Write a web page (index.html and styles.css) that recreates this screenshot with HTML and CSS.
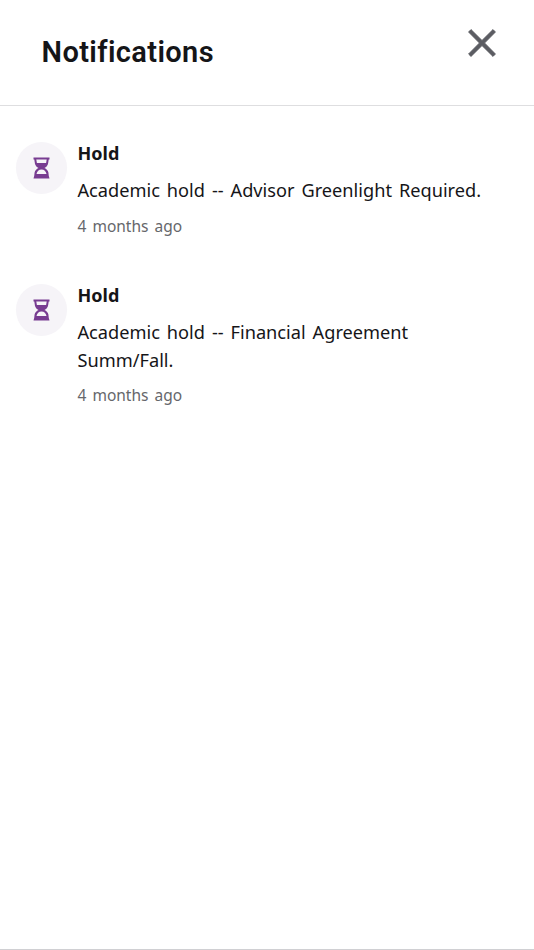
FILE: index.html
```html
<!DOCTYPE html>
<html lang="en">
<head>
    <meta charset="UTF-8">
    <meta name="viewport" content="width=device-width, initial-scale=1.0">
    <title>Notifications</title>
    <link rel="stylesheet" href="styles.css">
</head>
<body>
    <div class="panel">
        <header class="panel-header">
            <h1>Notifications</h1>
            <button type="button" class="close-btn" aria-label="Close">
                <svg width="28" height="28" viewBox="0 0 28 28">
                    <path d="M3 0.600L14 11.500L25 0.600L27.400 3L16.500 14L27.400 25L25 27.400L14 16.500L3 27.400L0.600 25L11.500 14L0.600 3Z" />
                </svg>
            </button>
        </header>

        <ul class="notification-list">
            <li class="notification">
                <span class="notification-icon">
                    <svg width="17" height="22" viewBox="0 0 17 22">
                        <path fill-rule="evenodd" d="M0.500 0.500H16.500V2.500H15.700L15 7C14.300 9 13.200 10.200 11.500 11C13.500 12 15 13.500 15.400 15.500L15.800 19L16.500 21.500H0.500L1.200 19L1.600 15.500C2 13.500 3.500 12 5.500 11C3.800 10.200 2.700 9 2 7L1.300 2.500H0.500ZM3.300 2.500L3.900 6H13.100L13.700 2.500ZM3.500 17H13.500C13 14.300 11.200 12.500 8.500 12.500S4 14.300 3.500 17Z" />
                    </svg>
                </span>
                <div class="notification-body">
                    <h2>Hold</h2>
                    <p class="message">Academic hold -- Advisor Greenlight Required.</p>
                    <p class="time">4 months ago</p>
                </div>
            </li>
            <li class="notification">
                <span class="notification-icon">
                    <svg width="17" height="22" viewBox="0 0 17 22">
                        <path fill-rule="evenodd" d="M0.500 0.500H16.500V2.500H15.700L15 7C14.300 9 13.200 10.200 11.500 11C13.500 12 15 13.500 15.400 15.500L15.800 19L16.500 21.500H0.500L1.200 19L1.600 15.500C2 13.500 3.500 12 5.500 11C3.800 10.200 2.700 9 2 7L1.300 2.500H0.500ZM3.300 2.500L3.900 6H13.100L13.700 2.500ZM3.500 17H13.500C13 14.300 11.200 12.500 8.500 12.500S4 14.300 3.500 17Z" />
                    </svg>
                </span>
                <div class="notification-body">
                    <h2>Hold</h2>
                    <p class="message">Academic hold -- Financial Agreement Summ/Fall.</p>
                    <p class="time">4 months ago</p>
                </div>
            </li>
        </ul>
    </div>
</body>
</html>
```

FILE: styles.css
```css
* {
    margin: 0;
    padding: 0;
    box-sizing: border-box;
}

body {
    font-family: 'Noto Sans', sans-serif;
    background-color: #fff;
    color: #151518;
}

.panel {
    height: 950px;
    border-bottom: 1px solid #d0d0d3;
}

.panel-header {
    display: flex;
    justify-content: space-between;
    align-items: flex-start;
    height: 106px;
    padding: 29px 38px 0 41.5px;
    border-bottom: 1px solid #dedee0;
}

h1 {
    font-family: 'Roboto', sans-serif;
    font-size: 29px;
    font-weight: 600;
    line-height: 47px;
    letter-spacing: 0.38px;
}

.close-btn {
    display: flex;
    border: none;
    background: none;
    cursor: pointer;
}

.close-btn svg {
    fill: #5b5c62;
    stroke: #5b5c62;
    stroke-width: 1;
    stroke-linejoin: round;
}

.notification-list {
    list-style: none;
    padding: 36px 15.5px 0;
}

.notification {
    display: flex;
    gap: 10.5px;
    margin-bottom: 47.5px;
}

.notification-icon {
    display: flex;
    flex: none;
    justify-content: center;
    align-items: center;
    width: 51.5px;
    height: 51.5px;
    border-radius: 50%;
    background-color: #f6f4f8;
}

.notification-icon svg {
    fill: #783c91;
}

.notification-body h2 {
    font-size: 18px;
    font-weight: 700;
    line-height: 22px;
}

.message {
    max-width: 420px;
    margin-top: 13px;
    font-size: 18.2px;
    line-height: 27.5px;
    word-spacing: 2.2px;
}

.time {
    margin-top: 10px;
    color: #66676b;
    font-size: 15.5px;
    line-height: 22px;
    word-spacing: 2px;
}
```
